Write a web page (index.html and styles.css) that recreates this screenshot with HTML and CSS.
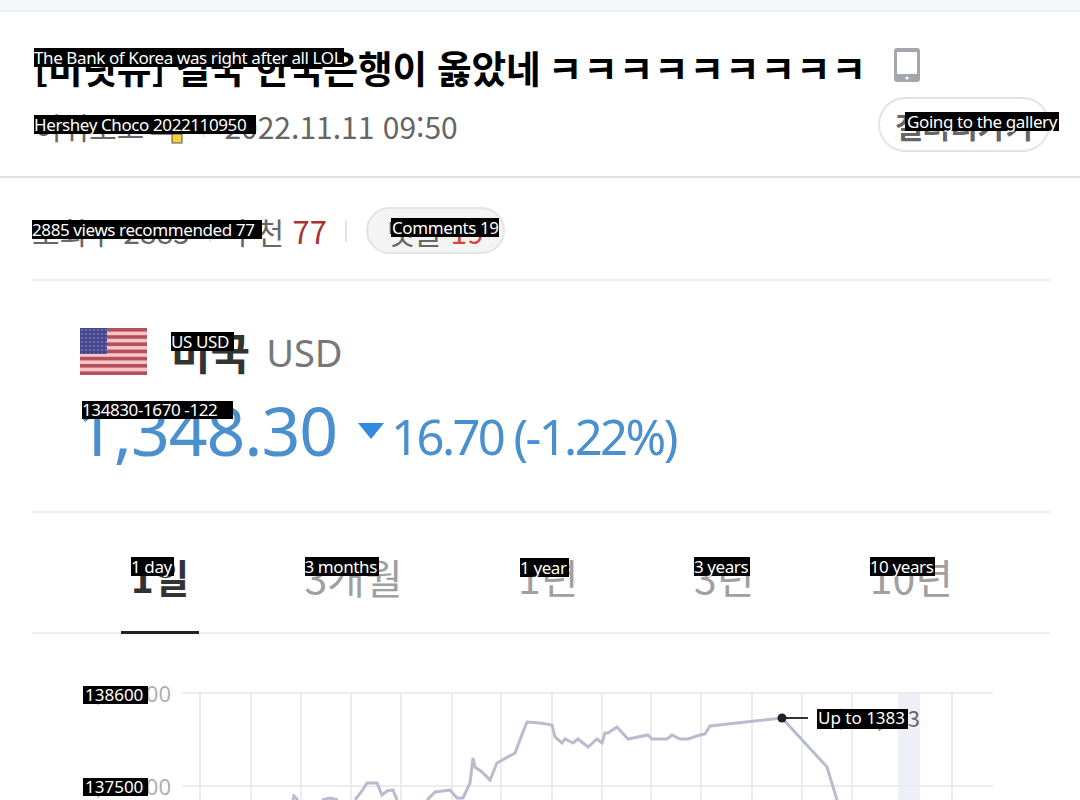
FILE: index.html
```html
<!DOCTYPE html>
<html lang="ko">
<head>
  <meta charset="UTF-8">
  <title>결국 한국은행이 옳았네</title>
  <link rel="stylesheet" href="styles.css">
</head>
<body>
  <div class="top-bar"></div>

  <header class="post-head">
    <div class="title-row">
      <h1 class="title">[비릿뉴] 결국 한국은행이 옳았네 <span class="laugh">ㅋㅋㅋㅋㅋㅋㅋㅋㅋ</span></h1>
      <svg class="phone-icon" width="26" height="34" viewBox="0 0 26 34">
        <rect x="0" y="0" width="26" height="34" rx="3" fill="#a3a6ad"/>
        <rect x="3" y="4" width="20" height="22" fill="#fff"/>
        <circle cx="13" cy="30" r="1.6" fill="#fff"/>
      </svg>
      <span class="tl tl-title">The Bank of Korea was right after all LOL</span>
    </div>
    <div class="meta-row">
      <div class="meta">
        <span>허쉬초코</span>
        <svg class="nick-icon" width="34" height="30" viewBox="0 0 34 30">
          <rect x="0" y="1" width="28" height="20" rx="2" fill="#8c8c8c"/>
          <rect x="3" y="5" width="22" height="12" fill="#bdbdbd"/>
          <rect x="22" y="20" width="10" height="9" fill="#f2d33c" stroke="#555" stroke-width="1"/>
        </svg>
        <i class="sep sep-meta"></i>
        <span>2022.11.11 09:50</span>
        <span class="tl tl-author">Hershey Choco 2022110950</span>
      </div>
      <button class="gallery-btn">
        갤러리가기
        <span class="tl tl-gallery">Going to the gallery</span>
      </button>
    </div>
  </header>

  <main class="content">
    <div class="stats">
      <span>조회수 2885</span>
      <i class="sep sep-stat"></i>
      <span>추천 <b class="red">77</b></span>
      <i class="sep sep-wide"></i>
      <button class="comment-btn">
        댓글 <b class="red">19</b>
        <span class="tl tl-comment">Comments 19</span>
      </button>
      <span class="tl tl-stats">2885 views recommended 77</span>
    </div>

    <section class="rate">
      <div class="rate-name">
        <svg class="flag" width="67" height="47" viewBox="0 0 67 47">
          <defs>
            <pattern id="stars" width="4" height="4" patternUnits="userSpaceOnUse">
              <circle cx="2" cy="2" r="0.8" fill="#9a9ad0"/>
            </pattern>
          </defs>
          <rect width="67" height="47" fill="#f4c4c6"/>
          <g fill="#b4505a">
            <rect y="0" width="67" height="3.6"/>
            <rect y="7.2" width="67" height="3.6"/>
            <rect y="14.4" width="67" height="3.6"/>
            <rect y="21.6" width="67" height="3.6"/>
            <rect y="28.8" width="67" height="3.6"/>
            <rect y="36" width="67" height="3.6"/>
            <rect y="43.4" width="67" height="3.6"/>
          </g>
          <rect width="27" height="26" fill="#46468f"/>
          <rect width="27" height="26" fill="url(#stars)"/>
        </svg>
        <strong class="country">미국</strong>
        <span class="code">USD</span>
        <span class="tl tl-country">US USD</span>
      </div>
      <div class="rate-price">
        <span class="price">1,348.30</span>
        <i class="down"></i>
        <span class="change">16.70 (-1.22%)</span>
        <span class="tl tl-price">134830-1670 -122</span>
      </div>
    </section>

    <nav class="tabs">
      <a class="tab active">1일<span class="tl tl-tab">1 day</span></a>
      <a class="tab">3개월<span class="tl tl-tab">3 months</span></a>
      <a class="tab">1년<span class="tl tl-tab">1 year</span></a>
      <a class="tab">3년<span class="tl tl-tab">3 years</span></a>
      <a class="tab">10년<span class="tl tl-tab">10 years</span></a>
    </nav>
  </main>

  <svg class="chart" width="1080" height="166" viewBox="0 634 1080 166">
    <rect x="898" y="693" width="22" height="107" fill="#eff0f7"/>
    <g class="grid">
      <path d="M182 693H993M182 786H993"/>
      <path d="M200 693V800M251 693V800M301 693V800M351 693V800M401 693V800M452 693V800M501 693V800M552 693V800M602 693V800M651 693V800M701 693V800M752 693V800M802 693V800M852 693V800M952 693V800"/>
    </g>
    <path class="line" d="M293 800L294 796L298 800M322 800L330 798L338 800M355 800L362 791L367 783L377 783L382 795L387 791L393 790L397 800M427 800L435 792L442 791L450 790L457 798L463 798L470 783L473 758L475 767L482 772L490 780L497 763L515 753L523 732L527 722L540 723L552 725L555 737L562 743L565 739L573 743L578 739L588 747L597 739L602 743L605 733L608 733L617 727L628 739L648 735L652 739L667 739L672 735L680 739L688 739L700 735L705 734L710 726L782 718L827 767L837 800"/>
    <path class="pointer" d="M782 718H808"/>
    <circle cx="782" cy="718" r="4.5" fill="#222"/>
    <text class="axis" x="171" y="702" text-anchor="end">1,386.00</text>
    <text class="axis" x="171" y="795" text-anchor="end">1,375.00</text>
    <text class="peak" x="920" y="727" text-anchor="end">최고1,383</text>
    <g class="tl-svg">
      <rect x="83" y="686" width="65" height="18"/>
      <text x="85" y="701">138600</text>
      <rect x="83" y="778" width="65" height="18"/>
      <text x="85" y="793">137500</text>
      <rect x="817" y="709" width="91" height="20"/>
      <text x="818" y="724">Up to 1383</text>
    </g>
  </svg>
</body>
</html>
```

FILE: styles.css
```css
* {
  margin: 0;
  padding: 0;
  box-sizing: border-box;
}

html, body {
  height: 800px;
  overflow: hidden;
}

body {
  background: #fff;
  font-family: "Noto Sans CJK KR", "Noto Sans", sans-serif;
  color: #555;
}

.top-bar {
  height: 12px;
  background: #f6f7fa;
  border-bottom: 2px solid #eceef4;
}

/* translated labels sitting on top of the korean text */
.tl {
  position: absolute;
  background: #000;
  color: #fff;
  font-family: "Noto Sans", sans-serif;
  font-size: 17px;
  font-weight: 400;
  line-height: 19px;
  letter-spacing: -0.4px;
  white-space: nowrap;
}

.post-head {
  height: 166px;
  padding: 32px 30px 0 34px;
  border-bottom: 2px solid #e2e2e2;
}

.title-row {
  position: relative;
  display: flex;
  align-items: center;
  height: 46px;
}

.title {
  font-size: 37.7px;
  font-weight: 700;
  line-height: 46px;
  letter-spacing: -0.25px;
  color: #000;
  white-space: nowrap;
}

.laugh {
  margin-left: -3px;
  letter-spacing: 0.8px;
}

.phone-icon {
  margin: -4px 0 0 27px;
}

.tl-title {
  left: 0;
  top: 4px;
  width: 310px;
}

.meta-row {
  display: flex;
  justify-content: space-between;
  align-items: flex-start;
  margin-top: 7px;
}

.meta {
  position: relative;
  display: flex;
  align-items: center;
  gap: 6px;
  margin-top: 7px;
  font-size: 30px;
  line-height: 44px;
  color: #666;
}

.nick-icon {
  margin-top: 6px;
}

.sep {
  display: block;
  width: 2px;
  height: 22px;
  background: #e4e4e4;
  margin: 0 9px;
}

.sep-meta {
  margin: 0 13px;
}

.tl-author {
  left: 0;
  top: 11px;
  width: 222px;
}

.gallery-btn {
  position: relative;
  width: 172px;
  height: 55px;
  border: 2px solid #e4e4e4;
  border-radius: 28px;
  background: #fff;
  font-family: inherit;
  font-size: 30px;
  font-weight: 700;
  color: #666;
}

.tl-gallery {
  left: 25px;
  top: 13px;
  width: 154px;
}

.content {
  padding: 0 30px 0 32px;
}

.stats {
  position: relative;
  display: flex;
  align-items: center;
  height: 103px;
  padding-top: 4px;
  border-bottom: 2px solid #eeeeee;
  font-size: 30px;
  color: #666;
}

.red {
  font-size: 31px;
  font-weight: 400;
  color: #a83232;
}

.sep-stat {
  margin: 0 18px 0 19px;
}

.sep-wide {
  margin: 0 19px 0 18px;
}

.comment-btn {
  position: relative;
  width: 139px;
  height: 47px;
  border: 2px solid #e4e4e4;
  border-radius: 24px;
  background: #f4f4f4;
  font-family: inherit;
  font-size: 30px;
  color: #666;
}

.comment-btn .red {
  font-size: 30px;
  color: #d9443c;
}

.tl-comment {
  left: 23px;
  top: 9px;
  width: 108px;
  padding-left: 1px;
}

.tl-stats {
  left: 0;
  top: 42px;
  width: 230px;
}

.rate {
  height: 232px;
  padding: 45px 0 0 48px;
  border-bottom: 2px solid #eeeeee;
}

.rate-name {
  position: relative;
  display: flex;
  align-items: center;
  height: 50px;
}

.flag {
  margin-right: 24px;
}

.country {
  font-size: 43px;
  font-weight: 700;
  color: #333;
}

.code {
  margin: 2px 0 0 16px;
  font-family: "Noto Sans", sans-serif;
  font-size: 38px;
  color: #777;
}

.tl-country {
  left: 91px;
  top: 6px;
  width: 63px;
}

.rate-price {
  position: relative;
  display: flex;
  align-items: flex-end;
  margin-top: 12px;
  color: #4a8fce;
}

.price {
  margin-left: -4px;
  font-family: "Noto Sans", sans-serif;
  font-size: 68px;
  line-height: 84px;
  letter-spacing: -1.1px;
}

.down {
  width: 0;
  height: 0;
  margin: 0 7px 33px 21px;
  border-left: 13px solid transparent;
  border-right: 13px solid transparent;
  border-top: 16px solid #2f8ae0;
}

.change {
  font-family: "Noto Sans", sans-serif;
  font-size: 49px;
  line-height: 72px;
  letter-spacing: -2.6px;
}

.tl-price {
  left: 2px;
  top: 13px;
  width: 151px;
  line-height: 18px;
}

.tabs {
  display: flex;
  justify-content: space-between;
  height: 121px;
  padding: 36px 87px 0 89px;
  border-bottom: 2px solid #eeeeee;
}

.tab {
  position: relative;
  height: 85px;
  padding: 0 10px;
  font-size: 41px;
  line-height: 54px;
  color: #a0a0a0;
}

.tab.active {
  color: #333;
  font-size: 38.5px;
  font-weight: 700;
  border-bottom: 3px solid #222;
}

.tl-tab {
  left: 10px;
  top: 8px;
  padding-right: 2px;
}

.tab:nth-child(3) .tl-tab {
  left: 12px;
  top: 9px;
}

.chart {
  display: block;
}

.grid path {
  fill: none;
  stroke: #ebebf0;
  stroke-width: 2;
}

.line {
  fill: none;
  stroke: #b8bccd;
  stroke-width: 3;
}

.pointer {
  fill: none;
  stroke: #333;
  stroke-width: 2;
}

.axis {
  font-family: "Noto Sans", sans-serif;
  font-size: 22px;
  fill: #b0b0b0;
}

.peak {
  font-family: "Noto Sans CJK KR", sans-serif;
  font-size: 22px;
  fill: #666;
}

.tl-svg rect {
  fill: #000;
}

.tl-svg text {
  font-family: "Noto Sans", sans-serif;
  font-size: 17px;
  fill: #fff;
}
```
